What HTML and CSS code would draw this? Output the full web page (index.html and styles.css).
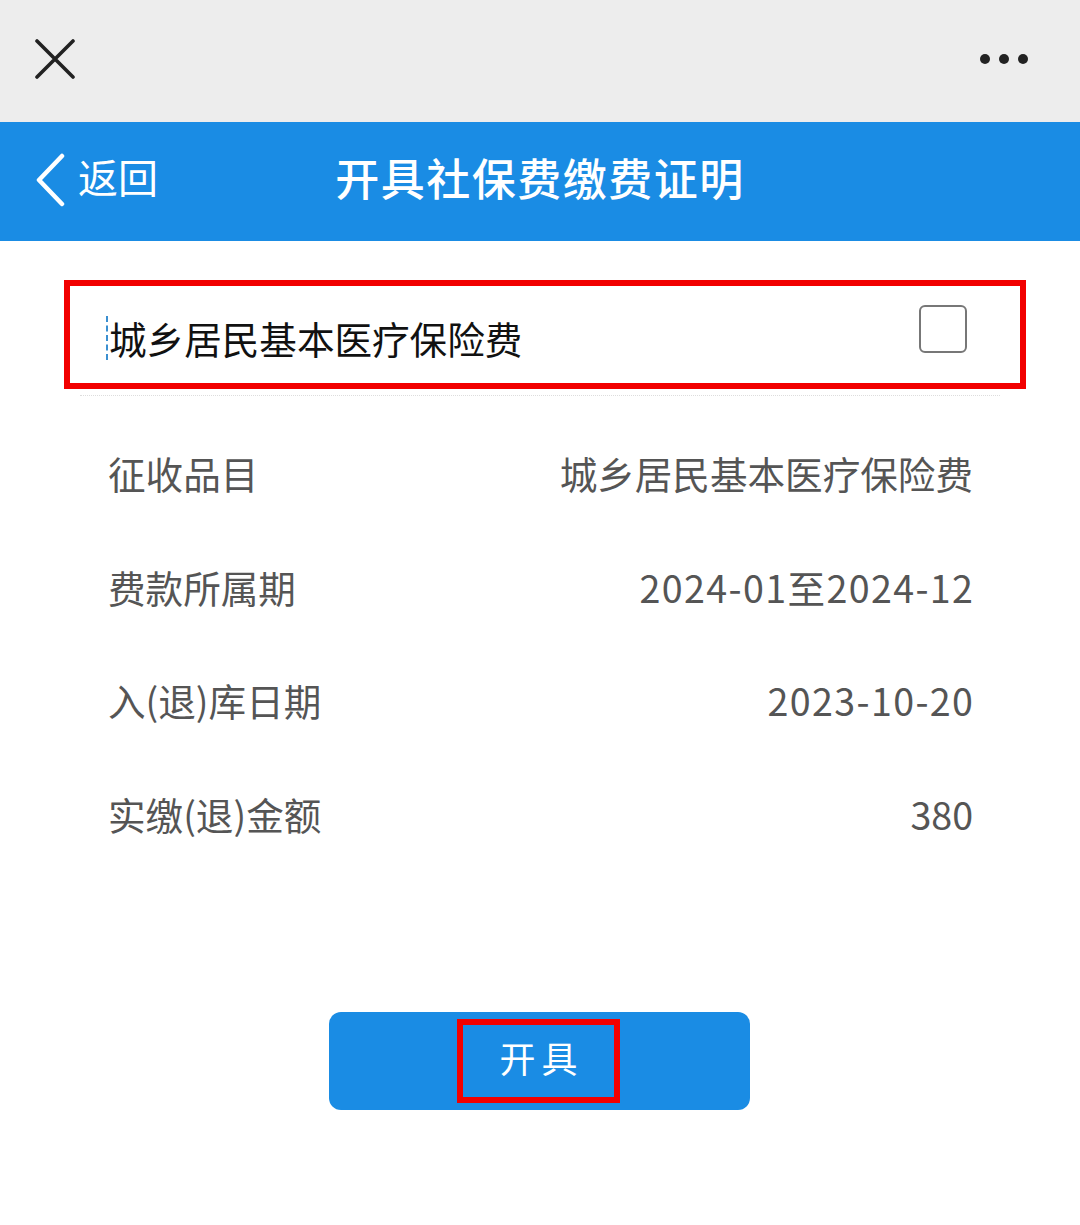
FILE: index.html
```html
<!DOCTYPE html>
<html lang="zh-CN">
<head>
  <meta charset="UTF-8" />
  <meta name="viewport" content="width=device-width, initial-scale=1.0"/>
  <title>开具社保费缴费证明</title>
  <link rel="stylesheet" href="styles.css">
</head>
<body>
<div class="topbar">
  <svg class="close-icon" width="40" height="40" viewBox="0 0 40 40">
    <path d="M2 2 L38 38 M38 2 L2 38" stroke="#222" stroke-width="3.6" stroke-linecap="round" fill="none"/>
  </svg>
  <div class="more">
    <span></span><span></span><span></span>
  </div>
</div>

<header class="navbar">
  <a class="back" href="#">
    <svg width="32" height="54" viewBox="0 0 32 54">
      <path d="M28 3 L5 27 L28 51" stroke="#fff" stroke-width="4.5" stroke-linecap="round" stroke-linejoin="round" fill="none"/>
    </svg>
    <span>返回</span>
  </a>
  <h1>开具社保费缴费证明</h1>
</header>

<main class="content">
  <div class="select-item">
    <span class="select-name">城乡居民基本医疗保险费</span>
    <span class="checkbox"></span>
  </div>
  <div class="divider"></div>

  <div class="info">
    <div class="row"><span class="label">征收品目</span><span class="value">城乡居民基本医疗保险费</span></div>
    <div class="row"><span class="label">费款所属期</span><span class="value num">2024-01至2024-12</span></div>
    <div class="row"><span class="label">入(退)库日期</span><span class="value num">2023-10-20</span></div>
    <div class="row"><span class="label">实缴(退)金额</span><span class="value">380</span></div>
  </div>

  <div class="actions">
    <button class="submit"><span class="submit-text">开具</span></button>
  </div>
</main>
</body>
</html>
```

FILE: styles.css
```css
body { margin: 0; background: #fff; font-family: "Noto Sans CJK SC", "Noto Sans", sans-serif; }

.topbar { height: 122px; background: #ededed; display: flex; align-items: center; justify-content: space-between; padding: 0 52px 0 35px; box-sizing: border-box; }
.close-icon { display: block; margin-top: -4px; }
.more { display: flex; gap: 9px; margin-top: -4px; }
.more span { width: 10px; height: 10px; border-radius: 50%; background: #222; }

.navbar { height: 119px; background: #1a8ce4; position: relative; display: flex; align-items: center; }
.navbar h1 { margin: -9px 0 0 0; width: 100%; text-align: center; color: #fff; font-size: 44px; font-weight: 500; letter-spacing: 1.5px; }
.back { position: absolute; left: 34px; top: 31px; display: flex; align-items: center; gap: 12px; color: #fff; text-decoration: none; font-size: 40px; }
.back span { margin-top: -8px; }
.back svg { display: block; }

.content { padding-top: 39px; }
.select-item { margin: 0 54px 0 64px; height: 109px; border: 6px solid #f20000; box-sizing: border-box; display: flex; align-items: center; justify-content: space-between; padding: 0 53px 0 36px; }
.select-name { font-size: 37.6px; color: #111; border-left: 2px dashed #3b8fd0; padding-left: 1px; line-height: 44px; margin-top: 6px; }
.checkbox { width: 44px; height: 44px; border: 2px solid #777; border-radius: 6px; margin-top: -12px; }
.divider { margin: 6px 80px 0 80px; border-top: 1px dotted #ddd; }

.info { margin-top: 20px; padding: 0 107px 0 108px; }
.row { height: 113.5px; display: flex; align-items: center; justify-content: space-between; font-size: 37.6px; color: #555; }
.num { letter-spacing: 1.4px; margin-right: -1.4px; }

.actions { display: flex; justify-content: center; margin-top: 142px; padding-right: 1px; }
.submit { width: 421px; height: 98px; background: #1a8ce4; border: none; border-radius: 12px; display: flex; align-items: center; justify-content: center; padding: 0; }
.submit-text { box-sizing: border-box; width: 163px; height: 84px; border: 6px solid #f20000; display: flex; align-items: center; justify-content: center; color: #fff; font-size: 36px; letter-spacing: 6px; padding: 0 0 8px 6px; margin-left: -2px; font-family: "Noto Sans CJK SC", sans-serif; }
```
